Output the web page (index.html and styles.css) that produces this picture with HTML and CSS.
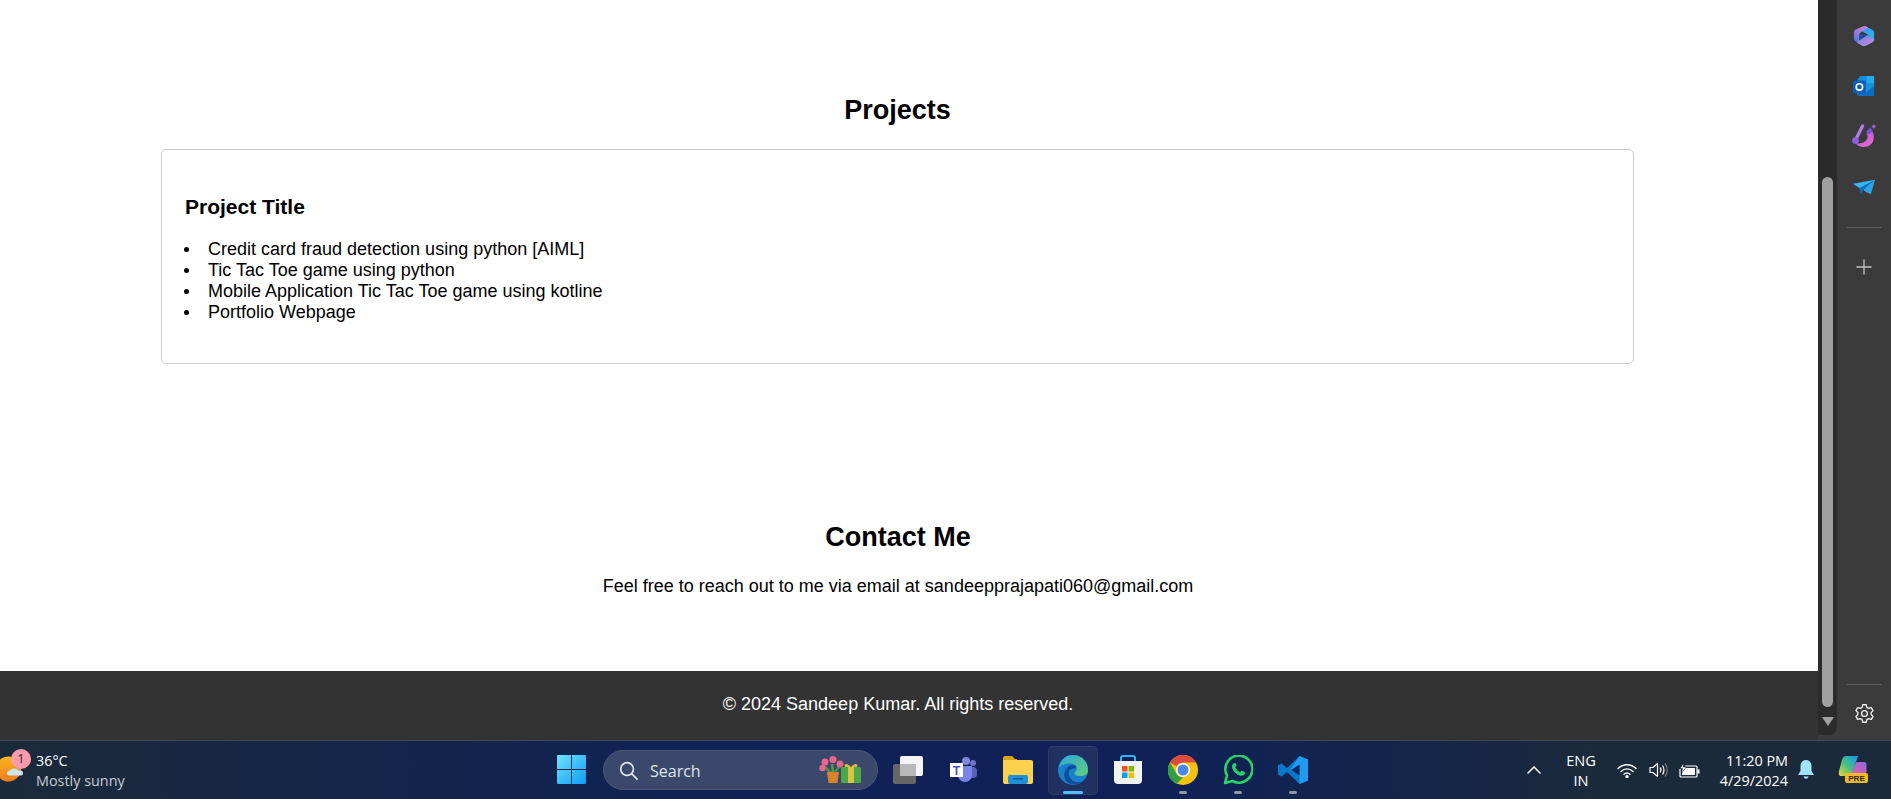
FILE: index.html
```html
<!DOCTYPE html>
<html lang="en">
<head>
<meta charset="utf-8">
<title>Portfolio</title>
<link rel="stylesheet" href="styles.css">
</head>
<body>
<div class="window">
  <div class="viewport">
    <main class="page">
      <section class="projects">
        <h2 class="heading">Projects</h2>
        <div class="card">
          <h3 class="card-title">Project Title</h3>
          <ul class="card-list">
            <li>Credit card fraud detection using python [AIML]</li>
            <li>Tic Tac Toe game using python</li>
            <li>Mobile Application Tic Tac Toe game using kotline</li>
            <li>Portfolio Webpage</li>
          </ul>
        </div>
      </section>
      <section class="contact">
        <h2 class="heading">Contact Me</h2>
        <p class="contact-text">Feel free to reach out to me via email at sandeepprajapati060@gmail.com</p>
      </section>
    </main>
    <footer class="footer">© 2024 Sandeep Kumar. All rights reserved.</footer>
  </div>
  <div class="scrollbar">
    <div class="scroll-thumb"></div>
    <div class="scroll-arrow"></div>
  </div>
  <aside class="sidebar">
    <div class="side-icons">
      <svg class="side-icon" viewBox="0 0 24 24"><defs><linearGradient id="c1" x1="0.600" y1="0" x2="0.200" y2="1"><stop offset="0" stop-color="#c77fd9"/><stop offset=".55" stop-color="#8a78dc"/><stop offset="1" stop-color="#3f78d8"/></linearGradient><linearGradient id="c2" x1="0" y1="0" x2="1" y2="1"><stop offset="0" stop-color="#2f9ae6"/><stop offset="1" stop-color="#35b5ee"/></linearGradient><linearGradient id="c3" x1="0" y1="0" x2="1" y2="1"><stop offset="0" stop-color="#7c7fe0"/><stop offset="1" stop-color="#c48ae6"/></linearGradient></defs><path d="M13 1L21.500 5.500Q23 6.500 23 8V16Q23 17.500 21.500 18.500L17 21V12Q17 10.500 15.500 10L10 7Z" fill="url(#c2)"/><path d="M10.500 1.500Q12.500 .5 14.500 1.500L16.500 2.700L9 7.500Q7 8.700 7 11V20.500L3 18Q1 17 1 15V7.500Q1 6 2.500 5.200Z" fill="url(#c1)"/><path d="M7 16.500L15.500 11.200Q17 10.500 17 12.500V13L23 15.800V16Q23 17.500 21.500 18.500L14 22.700Q12 23.700 10 22.700L4 19.200Z" fill="url(#c3)"/><path d="M7 11L9 9.700L15.500 11.200L7 16.500Z" fill="#1f4fa8"/></svg>
      <svg class="side-icon" viewBox="0 0 24 24"><path d="M8 1H22a1 1 0 0 1 1 1V22a1 1 0 0 1-1 1H6a1 1 0 0 1-1-1V5Z" fill="#1490df"/><path d="M15 1h7a1 1 0 0 1 1 1v7h-8z" fill="#28a8ea"/><path d="M5 14l9 5 9-7v10a1 1 0 0 1-1 1H6a1 1 0 0 1-1-1Z" fill="#0f6cbd"/><rect x="0" y="6" width="14" height="14" rx="1.500" fill="#0a5fb4"/><circle cx="7" cy="13" r="3.500" fill="none" stroke="#fff" stroke-width="1.800"/></svg>
      <svg class="side-icon side-icon-wide" viewBox="0 0 24 24"><defs><linearGradient id="d1" x1="0" y1="0" x2="1" y2="1"><stop offset="0" stop-color="#a84fe0"/><stop offset="1" stop-color="#ee6fd0"/></linearGradient></defs><path d="M14.500 10L19 6C24 11 22.500 23 12 23C8 23 5 21.500 3 18.500C8 20.500 13 19 15 15C16 13 15.800 11 14.500 10Z" fill="url(#d1)"/><path d="M4.500 14L10.500 2" stroke="#b57be8" stroke-width="3.200" stroke-linecap="round" fill="none"/><circle cx="3.500" cy="16.500" r="3.300" fill="#8f5fe0"/><path d="M14 8L18 3.500L21 7L17 10.500Z" fill="#7a4fd8"/><rect x="20.200" y="1" width="3.200" height="3.200" fill="#8f5fe0" transform="rotate(40 21.800 2.600)"/></svg>
      <svg class="side-icon side-icon-plane" viewBox="0 0 24 24"><path d="M0 8.500L24 4L16 12L7 13Z" fill="#35b8f0"/><path d="M24 4L19.500 20Q14 18 11 15Z" fill="#2aa5e8"/><path d="M7 13L24 4L11 15L8.500 20Z" fill="#0f6fc0"/></svg>
    </div>
    <hr class="side-rule side-rule-top">
    <svg class="side-plus" viewBox="0 0 16 16"><path d="M8 0.500V15.500M0.500 8H15.500" stroke="#c4c4c4" stroke-width="1.300"/></svg>
    <div class="side-spacer"></div>
    <hr class="side-rule">
    <svg class="side-gear" viewBox="0 0 24 24" fill="none" stroke="#f0f0f0" stroke-width="1.500" stroke-linejoin="round"><circle cx="12" cy="12" r="3.300"/><path d="M10 2h4l.7 3 2.200 1.200 2.900-.9 2 3.400-2.200 2.100v2.400l2.200 2.100-2 3.400-2.900-.9L14.700 19l-.7 3h-4l-.7-3-2.200-1.200-2.900.9-2-3.400 2.200-2.100v-2.400L2.200 8.700l2-3.400 2.900.9L9.300 5Z"/></svg>
  </aside>
</div>
<div class="taskbar">
  <div class="weather">
    <div class="weather-icon">
      <svg class="weather-art" viewBox="0 0 28 28"><defs><linearGradient id="sun" x1="0" y1="0" x2="0" y2="1"><stop offset="0" stop-color="#f7b520"/><stop offset="1" stop-color="#f07c18"/></linearGradient></defs><circle cx="10.500" cy="14" r="12.500" fill="url(#sun)"/><path d="M9 18.500a3 3 0 0 1 3-3 5 4 0 0 1 9 0.500 2.500 2.500 0 0 1 4 2.500 2 2 0 0 1-2 2H11a2 2 0 0 1-2-2Z" fill="#cfe3f7"/></svg>
      <span class="badge">1</span>
    </div>
    <div class="weather-text"><div class="temp">36°C</div><div class="cond">Mostly sunny</div></div>
  </div>
  <div class="task-center">
    <div class="task-cell">
      <svg class="task-icon" viewBox="0 0 30 30"><defs><linearGradient id="w" x1="0" y1="0" x2="1" y2="1"><stop offset="0" stop-color="#6fe3fb"/><stop offset="1" stop-color="#0f9bf5"/></linearGradient></defs><path d="M0 1a1 1 0 0 1 1-1H14V14H0ZM15 0H28a1 1 0 0 1 1 1V14H15ZM0 15H14V29H1a1 1 0 0 1-1-1ZM15 15H29V28a1 1 0 0 1-1 1H15Z" fill="url(#w)"/></svg>
    </div>
    <div class="search">
      <svg class="search-glass" viewBox="0 0 20 20" fill="none" stroke="#dfe4ee" stroke-width="1.800"><circle cx="8.500" cy="8.500" r="6.700"/><path d="M13.500 13.500L19 19" stroke-linecap="round"/></svg>
      <span class="search-label">Search</span>
      <svg class="search-art" viewBox="0 0 44 28"><path d="M13 8l1 8" stroke="#5a9a4a" stroke-width="2.500"/><path d="M6 11l6 6M20 11l-5 6" stroke="#4f8f48" stroke-width="2.500"/><g fill="#e8668c"><circle cx="6" cy="6" r="3.500"/><circle cx="14" cy="3.500" r="3.500"/><circle cx="3.500" cy="12" r="3.200"/><circle cx="21" cy="8" r="3.500"/></g><path d="M8 16H20L18.500 27H9.500Z" fill="#d9832a"/><rect x="22" y="11" width="20" height="16" rx="1" fill="#4aa845"/><rect x="29" y="11" width="6" height="16" fill="#d9c244"/><path d="M32 11c-4-5-8-3-6 0ZM32 11c4-5 8-3 6 0Z" fill="#e0b93c"/></svg>
    </div>
    <div class="task-cell task-view">
      <svg class="task-icon" viewBox="0 0 30 28"><rect x="0" y="8" width="23" height="20" rx="2" fill="#666"/><rect x="7" y="0" width="23" height="20" rx="2" fill="#f5f5f5"/><rect x="7" y="8" width="16" height="12" fill="#b9b9b9"/></svg>
    </div>
    <div class="task-cell">
      <svg class="task-icon" viewBox="0 0 30 30"><circle cx="25" cy="8" r="3" fill="#6d72c9"/><rect x="20" y="12" width="9" height="11" rx="4" fill="#5a60b8"/><circle cx="18" cy="6" r="4" fill="#8187dd"/><path d="M10 11H24V20a7 7 0 0 1-14 0Z" fill="#7b83eb"/><rect x="2" y="8" width="13" height="14" fill="#fff"/><text class="teams-t" x="8.500" y="20">T</text></svg>
    </div>
    <div class="task-cell">
      <svg class="task-icon" viewBox="0 0 30 28"><path d="M0 2a2 2 0 0 1 2-2H9l3 3H14V6H0Z" fill="#d9a413"/><path d="M0 4H28a2 2 0 0 1 2 2V26a2 2 0 0 1-2 2H2a2 2 0 0 1-2-2Z" fill="#fcd14d"/><rect x="5" y="19" width="20" height="9" rx="2" fill="#1f8fd6"/><rect x="10" y="22" width="10" height="1.500" fill="#0b5c9e"/></svg>
    </div>
    <div class="task-cell task-active">
      <svg class="task-icon" viewBox="0 0 30 30"><defs><linearGradient id="e1" x1="0" y1="0" x2="1" y2="1"><stop offset="0" stop-color="#2fa7dc"/><stop offset="1" stop-color="#5fd07a"/></linearGradient></defs><circle cx="15" cy="15" r="15" fill="#1a7fc9"/><path d="M1 13C2 5 8 0 15 0 24 0 30 7 30 15 30 20 26 21 22 21 18 21 15 19 17 17 19 15 20 12 17 10 12 7 3 9 1 13Z" fill="url(#e1)"/><path d="M11 16C9 24 18 30 25 26 21 31 10 31 7 24 5 19 7 14 11 11 14 9 18 10 18 12 18 14 12 13 11 16Z" fill="#0c4f9e"/></svg>
      <span class="running running-on"></span>
    </div>
    <div class="task-cell">
      <svg class="task-icon" viewBox="0 0 30 30"><path d="M8 7V3a2 2 0 0 1 2-2H20a2 2 0 0 1 2 2V7" fill="none" stroke="#2fb5ee" stroke-width="2"/><path d="M1 6H29V25a4 4 0 0 1-4 4H5a4 4 0 0 1-4-4Z" fill="#f3f3f3"/><rect x="9" y="11" width="5.500" height="5.500" fill="#f25022"/><rect x="15.500" y="11" width="5.500" height="5.500" fill="#7fba00"/><rect x="9" y="17.500" width="5.500" height="5.500" fill="#00a4ef"/><rect x="15.500" y="17.500" width="5.500" height="5.500" fill="#ffb900"/></svg>
    </div>
    <div class="task-cell">
      <svg class="task-icon" viewBox="0 0 30 30"><circle cx="15" cy="15" r="15" fill="#f4c20d"/><path d="M15 0A15 15 0 0 1 28 7.500H15A7.500 7.500 0 0 0 8.500 11.250L2 7.500A15 15 0 0 1 15 0Z" fill="#dd4b3e"/><path d="M2 7.500L8.500 18.750A7.500 7.500 0 0 0 15 22.500L8.500 29A15 15 0 0 1 2 7.500Z" fill="#2f9e44"/><circle cx="15" cy="15" r="7" fill="#fff"/><circle cx="15" cy="15" r="5.500" fill="#4a86e8"/></svg>
      <span class="running"></span>
    </div>
    <div class="task-cell">
      <svg class="task-icon" viewBox="0 0 30 30"><path d="M2 28L4 20.500A13.500 13.500 0 1 1 9.500 26Z" fill="none" stroke="#25d366" stroke-width="2.600" stroke-linejoin="round"/><path d="M10.500 8.500c-1.500 1-2 3-1 5.500 1.500 3 4 5.500 7 6.500 2.500.7 4.500 0 5.500-2l-.3-1.500-3-1.500-1.500 1.700c-2-.8-4-2.800-5-5l1.500-1.500-1.200-3Z" fill="#25d366"/></svg>
      <span class="running"></span>
    </div>
    <div class="task-cell">
      <svg class="task-icon" viewBox="0 0 30 30"><path d="M21.500 1L30 4.500V25.500L21.500 29L9 17L3.500 21.500L0 19.500V10.500L3.500 8.500L9 13Z" fill="#0a78c8"/><path d="M21.500 1L30 4.500V25.500L21.500 29V20L21.500 10L12 15Z" fill="#1f9cf0"/><path d="M21.500 9.500L13.500 15L21.500 20.500Z" fill="#0b2a5e"/></svg>
      <span class="running"></span>
    </div>
  </div>
  <div class="tray">
    <svg class="tray-chevron" viewBox="0 0 14 8" fill="none" stroke="#fff" stroke-width="1.500" stroke-linecap="round"><path d="M1 7L7 1L13 7"/></svg>
    <div class="tray-lang"><div>ENG</div><div>IN</div></div>
    <svg class="tray-wifi" viewBox="0 0 20 15" fill="none" stroke="#fff" stroke-width="1.400" stroke-linecap="round"><path d="M1 5.500C6 .5 14 .5 19 5.500"/><path d="M4 8.500C7.500 5 12.500 5 16 8.500"/><path d="M7 11.300C8.800 9.700 11.200 9.700 13 11.300"/><circle cx="10" cy="13.600" r="1" fill="#fff"/></svg>
    <svg class="tray-vol" viewBox="0 0 20 16" fill="none" stroke="#fff" stroke-width="1.200"><path d="M1 5.500H4L8.500 1.500V14.500L4 10.500H1Z" stroke-linejoin="round"/><path d="M11 5.500C12.300 7 12.300 9 11 10.500M13.500 3.500C15.500 6 15.500 10 13.500 12.500"/><path d="M16 1.500C19 5 19 11 16 14.500" stroke="#777"/></svg>
    <svg class="tray-batt" viewBox="0 0 21 15"><path d="M6 3H17a1 1 0 0 1 1 1V13a1 1 0 0 1-1 1H2a1 1 0 0 1-1-1V6" fill="none" stroke="#fff" stroke-width="1.200"/><rect x="3" y="5" width="13" height="7" fill="#fff"/><rect x="18.500" y="6.500" width="2" height="4" fill="#fff"/><path d="M4.500 0L1 5.500H3.500L2.500 10L7.500 4H4.500Z" fill="#fff" stroke="#1b2a3a" stroke-width=".7"/></svg>
    <div class="tray-clock"><div>11:20 PM</div><div>4/29/2024</div></div>
    <svg class="tray-bell" viewBox="0 0 16 20"><path d="M8 0C4 0 2.500 3 2.500 6.500V11L0 15H16L13.500 11V6.500C13.500 3 12 0 8 0Z" fill="#9fe3ff"/><path d="M5.500 16.500H10.500C10 19.500 6 19.500 5.500 16.500Z" fill="#9fe3ff"/></svg>
    <svg class="tray-copilot" viewBox="0 0 30 30"><defs><linearGradient id="p1" x1="0" y1="1" x2="1" y2="0"><stop offset="0" stop-color="#f2d13a"/><stop offset=".5" stop-color="#3fc08a"/><stop offset="1" stop-color="#1f8ff0"/></linearGradient><linearGradient id="p2" x1="0" y1="1" x2="1" y2="0"><stop offset="0" stop-color="#f25aa0"/><stop offset="1" stop-color="#8b6ae8"/></linearGradient></defs><path d="M18 7H26Q28.500 7 28.500 10V16L27 21H12Z" fill="url(#p2)"/><path d="M8 1H20L13 21H3Q0 21 1 16L4 5Q5 1 8 1Z" fill="url(#p1)"/><rect x="7" y="18" width="23" height="10" rx="2" fill="#f6bb1a"/><text class="pre" x="18.500" y="26">PRE</text></svg>
  </div>
</div>
</body>
</html>
```
FILE: styles.css
```css
* { box-sizing: border-box; }
html, body { margin: 0; height: 100%; overflow: hidden; background: #fff; }
body { display: flex; flex-direction: column; font-family: "Liberation Sans", Arial, sans-serif; color: #000; }

.window { display: flex; height: 740px; flex: none; background: #3b3b3b; }
.viewport { flex: 1; display: flex; flex-direction: column; min-width: 0; }
.page { flex: 1; background: #fff; }

.projects { padding: 94px 184px 0 161px; }
.heading { margin: 0; font-size: 27px; line-height: 33px; font-weight: 700; text-align: center; }
.card { margin-top: 22px; height: 215px; padding: 45px 22px 0 23px; border: 1px solid #ccc; border-radius: 5px; }
.card-title { margin: 0; font-size: 21px; line-height: 24px; font-weight: 700; }
.card-list { margin: 20px 0 0; padding: 0 0 0 23px; font-size: 18px; line-height: 21px; list-style: none; }
.card-list li::before { content: ""; display: inline-block; width: 5px; height: 5px; margin: 0 19px 2px -24px; border-radius: 50%; background: #000; vertical-align: middle; }

.contact { margin-top: 157px; padding-right: 22px; text-align: center; }
.contact-text { margin: 22px 0 0; font-size: 18px; line-height: 21px; }

.footer { flex: none; height: 69px; background: #333; color: #fff; font-size: 18px; line-height: 67px; text-align: center; padding-right: 22px; }

.scrollbar { flex: none; width: 19px; height: 735px; background: #2b2b2b; border-bottom-right-radius: 8px; padding: 177px 4px 0; display: flex; flex-direction: column; align-items: center; }
.scroll-thumb { width: 11px; height: 530px; background: #9f9f9f; border-radius: 6px; }
.scroll-arrow { margin-top: 10px; width: 0; height: 0; border-left: 6px solid transparent; border-right: 6px solid transparent; border-top: 9px solid #a0a0a0; }

.sidebar { flex: none; width: 54px; background: #3b3b3b; display: flex; flex-direction: column; align-items: center; padding-top: 25px; }
.side-icons { display: flex; flex-direction: column; align-items: center; }
.side-icon { width: 22px; height: 22px; display: block; margin-bottom: 28px; flex: none; }
.side-icon-wide { width: 24px; height: 24px; margin-top: -1px; margin-bottom: 28px; }
.side-icon-plane { margin-bottom: 0; }
.side-rule { width: 35px; margin: 0; border: 0; border-top: 1px solid #5f5f5f; flex: none; }
.side-rule-top { margin-top: 29px; }
.side-plus { width: 16px; height: 16px; margin-top: 31px; flex: none; }
.side-spacer { flex: 1; }
.side-gear { width: 21px; height: 21px; margin: 18px 0 16px; flex: none; }

.taskbar { flex: none; height: 59px; display: flex; align-items: stretch; border-top: 1px solid #3f4a59; background: linear-gradient(90deg, #1b2a3a 0%, #14264a 20%, #0f2156 40%, #0f2156 62%, #15264a 75%, #1b2a3a 85%); font-family: "Open Sans", "Noto Sans", sans-serif; color: #fff; }

.weather { width: 547px; flex: none; display: flex; align-items: center; }
.weather-icon { width: 36px; height: 58px; position: relative; flex: none; }
.weather-art { position: absolute; left: -2px; top: 14px; width: 28px; height: 28px; }
.badge { position: absolute; left: 11px; top: 8px; width: 20px; height: 20px; border-radius: 50%; background: #f99ba8; color: #222; font-size: 12px; line-height: 20px; text-align: center; }
.weather-text { font-size: 14.4px; line-height: 20px; padding-top: 1px; }
.temp { color: #fff; }
.cond { color: #c6ccd4; }

.task-center { display: flex; align-items: center; flex: none; }
.task-cell { width: 50px; height: 49px; margin-right: 5px; display: flex; align-items: center; justify-content: center; position: relative; border-radius: 5px; border: 1px solid transparent; }
.task-icon { width: 30px; height: 30px; display: block; }
.task-active { background: rgba(255,255,255,.07); border-color: rgba(255,255,255,.06); }
.running { position: absolute; bottom: 0; left: 50%; width: 8px; height: 3px; margin-left: -4px; border-radius: 2px; background: #8e97a8; }
.running-on { width: 20px; margin-left: -10px; background: #4fc3f7; }

.search { width: 275px; height: 40px; margin: 0 5px 0 1px; border-radius: 20px; background: #39486b; border: 1px solid #4a5878; display: flex; align-items: center; padding: 0 15px; }
.search-glass { width: 19px; height: 19px; flex: none; }
.search-label { margin-left: 12px; padding-top: 2px; flex: 1; font-size: 16px; color: #dfe4ee; }
.search-art { width: 44px; height: 28px; margin-right: -1px; flex: none; }

.tray { flex: 1; display: flex; align-items: center; min-width: 0; }
.tray-chevron { width: 14px; height: 8px; margin-left: 204px; flex: none; }
.tray-lang { width: 50px; margin-left: 15px; text-align: center; font-size: 14.6px; line-height: 20px; flex: none; }
.tray-wifi { width: 20px; height: 15px; margin-left: 11px; flex: none; }
.tray-vol { width: 20px; height: 16px; margin-left: 12px; flex: none; }
.tray-batt { width: 21px; height: 15px; margin-left: 10px; flex: none; }
.tray-clock { width: 78px; margin-left: 10px; padding-top: 1px; text-align: right; font-size: 14.4px; line-height: 20px; flex: none; white-space: nowrap; }
.tray-bell { width: 16px; height: 20px; margin-left: 10px; flex: none; }
.tray-copilot { width: 30px; height: 30px; margin-left: 24px; flex: none; }
.teams-t { font-family: "Liberation Sans", sans-serif; font-size: 12px; font-weight: 700; fill: #4b53bc; text-anchor: middle; }
.pre { font-family: "Liberation Sans", sans-serif; font-size: 8px; font-weight: 700; fill: #222; text-anchor: middle; }
```
